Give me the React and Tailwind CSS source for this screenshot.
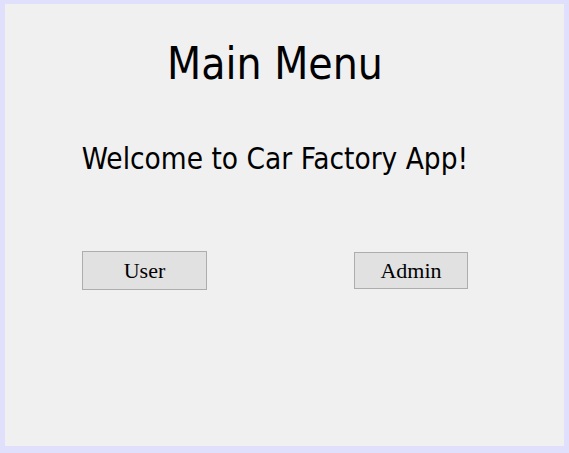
export default function App() {
  return (
    <div className="w-[569px] h-[453px] bg-[#e0e0fc] pt-[4px] pl-[5px] pr-[5px] pb-[7px]">
      <div className="w-full h-full bg-[#f0f0f0]">
        <div className="flex flex-col pl-[77px] w-[463px]">
          <h1
            className="mt-[38px] text-center whitespace-nowrap text-[44px] leading-[44px] text-black"
            style={{ fontFamily: '"DejaVu Sans Condensed", "DejaVu Sans", sans-serif' }}
          >
            Main Menu
          </h1>
          <p
            className="mt-[59px] -mx-[10px] text-center whitespace-nowrap text-[29.5px] leading-[29px] text-black"
            style={{ fontFamily: '"DejaVu Sans Condensed", "DejaVu Sans", sans-serif' }}
          >
            Welcome to Car Factory App!
          </p>
          <div className="mt-[77px] flex items-center justify-between">
            <button
              className="w-[125px] h-[39px] bg-[#e1e1e1] border border-[#adadad] text-[22px] text-black"
              style={{ fontFamily: '"Liberation Serif", serif' }}
            >
              User
            </button>
            <button
              className="w-[114px] h-[37px] bg-[#e1e1e1] border border-[#adadad] text-[22px] text-black"
              style={{ fontFamily: '"Liberation Serif", serif' }}
            >
              Admin
            </button>
          </div>
        </div>
      </div>
    </div>
  );
}
